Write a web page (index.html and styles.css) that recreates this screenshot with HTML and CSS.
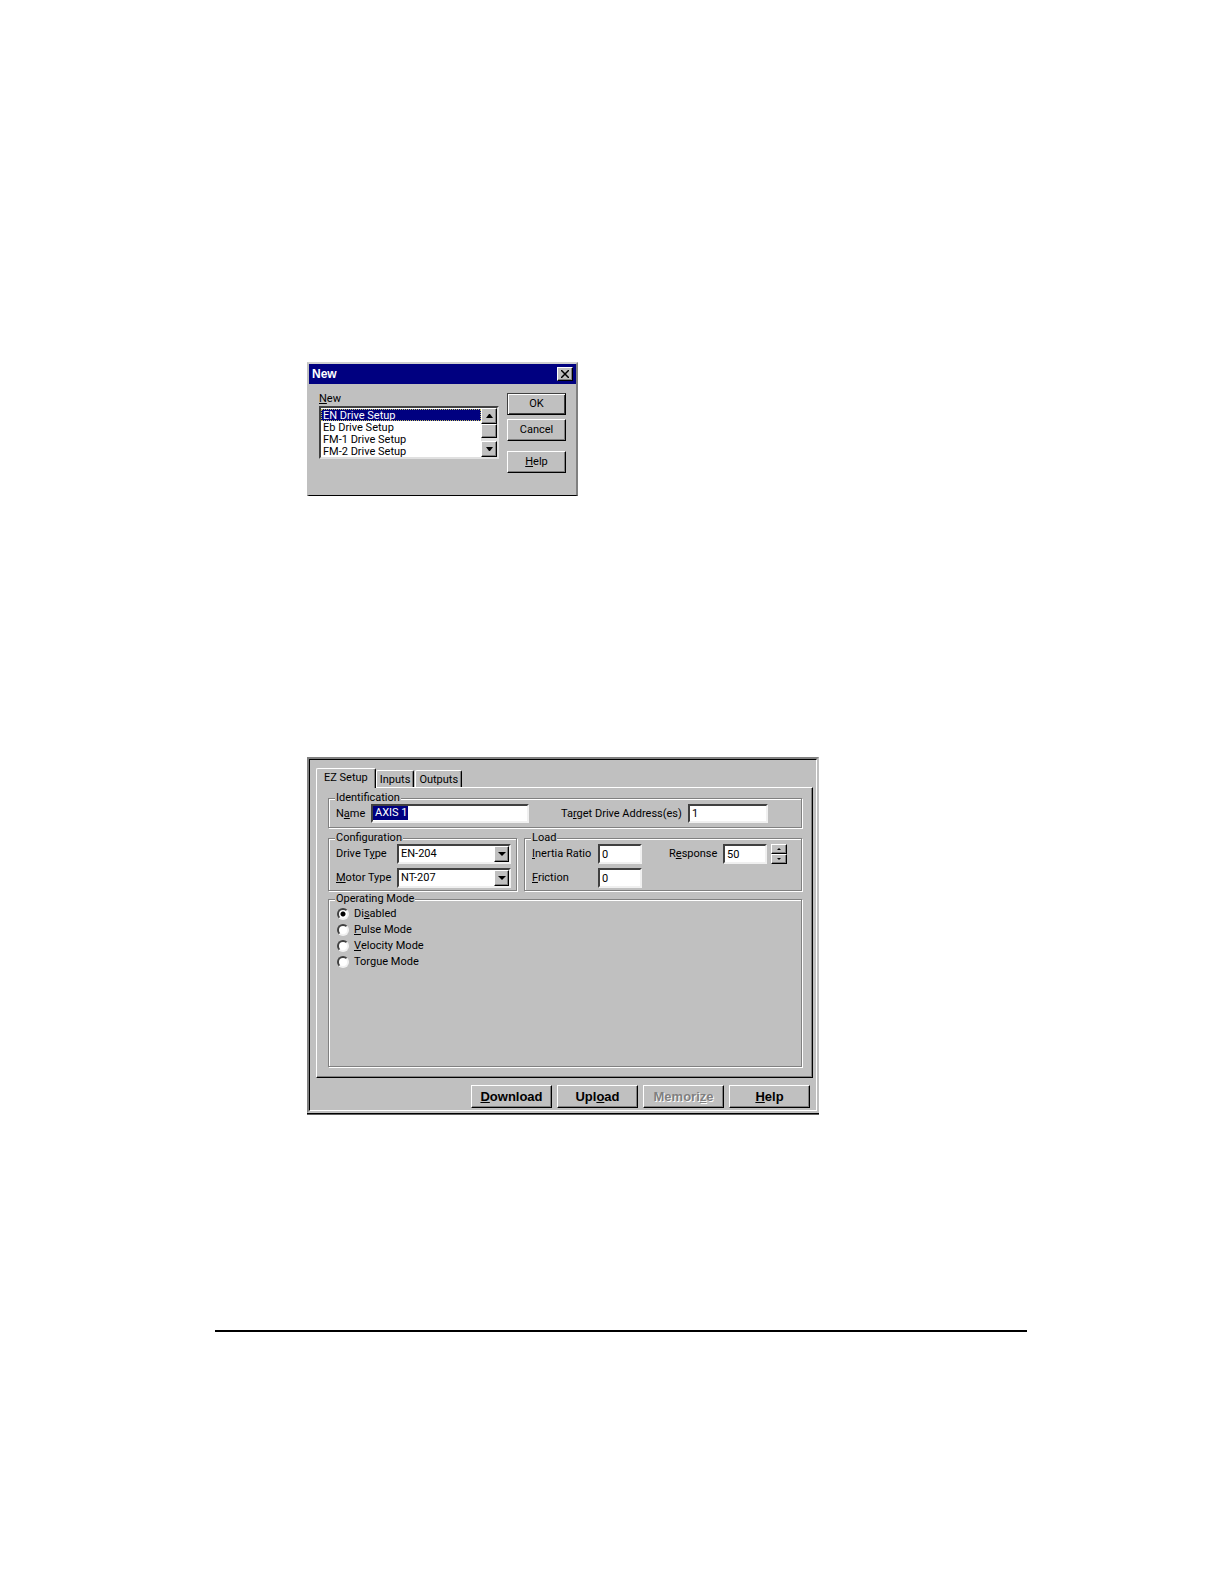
FILE: index.html
```html
<!DOCTYPE html>
<html lang="en">
<head>
  <meta charset="UTF-8">
  <title>Drive Setup</title>
  <meta name="viewport" content="width=device-width, initial-scale=1.0">
  <link rel="stylesheet" href="styles.css">
</head>
<body>
  <main>

    <!-- New dialog -->
    <section class="dialog">
      <header class="title-bar">
        <h2>New</h2>
        <button class="close" aria-label="Close">
          <svg width="8" height="8" viewBox="0 0 8 8"><path d="M0 0l8 8M8 0L0 8" stroke="#000" stroke-width="1.500"/></svg>
        </button>
      </header>
      <div class="dialog-body">
        <div class="list">
          <label for="new-list"><u>N</u>ew</label>
          <div class="list-box">
            <select id="new-list" size="4">
              <option selected>EN Drive Setup</option>
              <option>Eb Drive Setup</option>
              <option>FM-1 Drive Setup</option>
              <option>FM-2 Drive Setup</option>
            </select>
            <div class="scroll-bar">
              <button class="scroll-button" aria-label="Scroll up"><svg width="7" height="4" viewBox="0 0 7 4"><path d="M0 4h7L4 0H3z"/></svg></button>
              <div class="thumb"></div>
              <button class="scroll-button" aria-label="Scroll down"><svg width="7" height="4" viewBox="0 0 7 4"><path d="M0 0h7L4 4H3z"/></svg></button>
            </div>
          </div>
        </div>
        <div class="dialog-buttons">
          <button class="default">OK</button>
          <button>Cancel</button>
          <button class="help"><u>H</u>elp</button>
        </div>
      </div>
    </section>

    <!-- EZ Setup window -->
    <section class="window">
      <div class="window-inner">
        <nav class="tabs" role="tablist">
          <button class="tab active" role="tab" aria-selected="true">EZ Setup</button>
          <button class="tab" role="tab">Inputs</button>
          <button class="tab" role="tab">Outputs</button>
        </nav>

        <div class="panel">
          <fieldset class="identification">
            <legend>Identification</legend>
            <label for="name">N<u>a</u>me</label>
            <div class="name-field">
              <input type="text" id="name" value="AXIS 1">
              <span class="selection" aria-hidden="true">AXIS 1</span>
            </div>
            <label for="address">Ta<u>r</u>get Drive Address(es)</label>
            <input type="text" id="address" value="1">
          </fieldset>

          <div class="columns">
            <fieldset class="configuration">
              <legend>Configuration</legend>
              <label for="drive">Drive T<u>y</u>pe</label>
              <div class="drop-down">
                <select id="drive"><option>EN-204</option></select>
                <span class="arrow"><svg width="8" height="4" viewBox="0 0 8 4"><path d="M0 0h8L4 4z"/></svg></span>
              </div>
              <label for="motor"><u>M</u>otor Type</label>
              <div class="drop-down">
                <select id="motor"><option>NT-207</option></select>
                <span class="arrow"><svg width="8" height="4" viewBox="0 0 8 4"><path d="M0 0h8L4 4z"/></svg></span>
              </div>
            </fieldset>

            <fieldset class="load">
              <legend>Load</legend>
              <label for="inertia"><u>I</u>nertia Ratio</label>
              <input type="text" id="inertia" value="0">
              <label for="response" class="response">R<u>e</u>sponse</label>
              <input type="text" id="response" value="50">
              <div class="spinner">
                <button aria-label="Increase"><svg width="4" height="2" viewBox="0 0 4 2"><path d="M0 2h4L2 0z"/></svg></button>
                <button aria-label="Decrease"><svg width="4" height="2" viewBox="0 0 4 2"><path d="M0 0h4L2 2z"/></svg></button>
              </div>
              <label for="friction"><u>F</u>riction</label>
              <input type="text" id="friction" value="0">
            </fieldset>
          </div>

          <fieldset class="mode">
            <legend>Operating Mode</legend>
            <label><input type="radio" name="mode" checked>Di<u>s</u>abled</label>
            <label><input type="radio" name="mode"><u>P</u>ulse Mode</label>
            <label><input type="radio" name="mode"><u>V</u>elocity Mode</label>
            <label><input type="radio" name="mode">Tor<u>g</u>ue Mode</label>
          </fieldset>
        </div>

        <div class="actions">
          <button><u>D</u>ownload</button>
          <button>Upl<u>o</u>ad</button>
          <button disabled>Memori<u>z</u>e</button>
          <button><u>H</u>elp</button>
        </div>
      </div>
    </section>

    <hr>
  </main>
</body>
</html>
```

FILE: styles.css
```css
* {
  box-sizing: border-box;
}
body {
  background: #fff;
  color: #000;
  margin: 0;
}
body, button, input, select {
  font-family: Roboto, "Liberation Sans", Arial, sans-serif;
  font-size: 11px;
  line-height: 12px;
}
main {
  margin: 0 197px 0 215px;
  padding: 362px 0 64px;
}
u {
  text-underline-offset: 1px;
}
svg {
  display: block;
}
hr {
  background: #000;
  border: 0;
  height: 2px;
  margin: 217px 0 0;
}

/*raised grey buttons*/
button, .thumb, .arrow {
  align-items: center;
  background: #c0c0c0;
  border: 1px solid;
  border-color: #fff #000 #000 #fff;
  box-shadow: inset -1px -1px #808080;
  color: #000;
  display: flex;
  justify-content: center;
  margin: 0;
  padding: 0;
}

/*New dialog*/
.dialog {
  background: #c0c0c0;
  border: 2px solid;
  border-color: #d0d0d0 #808080 #808080 #c0c0c0;
  border-bottom: 1px solid #000;
  margin-left: 92px;
  max-width: 271px;
}
.title-bar {
  align-items: center;
  background: #000080;
  color: #fff;
  display: flex;
  height: 20px;
  justify-content: space-between;
  padding: 0 3px;
}
.title-bar h2 {
  font-family: "Liberation Sans", Arial, sans-serif;
  font-size: 12px;
  margin: 0;
}
.close {
  height: 14px;
  width: 16px;
}
.dialog-body {
  display: flex;
  gap: 8px;
  height: 111px;
  padding: 9px 10px 0;
}
.list {
  flex: 1;
}
.list label {
  display: block;
  height: 13px;
}
.list-box {
  background: #fff;
  border: 2px solid;
  border-color: #404040 #e0e0e0 #e0e0e0 #404040;
  display: flex;
  height: 53px;
}
.list-box select {
  border: 0;
  flex: 1;
  height: 49px;
  outline: 0;
  padding: 1px 0 0;
  scrollbar-width: none;
}
.list-box option {
  height: 12px;
  line-height: 12px;
  min-height: 12px;
  padding: 0 2px;
}
.list-box option:checked {
  background-image: linear-gradient(#000080, #000080);
  outline: 1px dotted #c0c060;
  outline-offset: -1px;
  -webkit-text-fill-color: #fff;
}
.scroll-bar {
  background: #e0e0e0;
  display: flex;
  flex-direction: column;
  width: 16px;
}
.scroll-button {
  height: 16px;
}
.thumb {
  height: 14px;
  margin-bottom: auto;
}
.dialog-buttons {
  display: flex;
  flex-direction: column;
  width: 59px;
}
.dialog-buttons button {
  height: 22px;
  margin-bottom: 4px;
}
.dialog-buttons .default {
  border-color: #404040 #000 #000 #404040;
  box-shadow: inset 1px 1px #fff, inset -1px -1px #404040;
}
.dialog-buttons .help {
  margin-top: 6px;
}

/*Setup window*/
.window {
  background: #c0c0c0;
  border: 2px solid;
  border-color: #808080 #c0c0c0 #c0c0c0 #808080;
  box-shadow: 0 1px #000, 0 2px #606060;
  margin: 261px 0 0 92px;
  max-width: 512px;
}
.window-inner {
  border: 1px solid;
  border-color: #000 #fff #fff #000;
  padding: 8px 3px 2px 6px;
}
.tabs {
  align-items: flex-end;
  display: flex;
  height: 19px;
}
.tab {
  border-color: #fff #000 #c0c0c0 #fff;
  border-bottom: 0;
  border-radius: 2px 2px 0 0;
  box-shadow: inset -1px 0 #808080;
  height: 17px;
  margin-right: 1px;
  padding: 1px 3px 0;
}
.tab.active {
  height: 20px;
  margin: 0 0 -1px;
  padding: 0 7px 2px;
  position: relative;
}
.panel {
  border: 1px solid;
  border-color: #fff #000 #000 #fff;
  box-shadow: inset -1px -1px #808080;
  padding: 4px 10px 10px 11px;
}
/*etched frame, grey line with a white one beside it*/
fieldset {
  border: 1px solid #808080;
  box-shadow: 1px 1px #fff, inset 1px 1px #fff;
  margin: 0;
  min-width: 0;
}
legend {
  background: #c0c0c0;
  line-height: 12px;
  margin-left: -1px;
  padding: 0 1px;
}
input[type="text"], .drop-down select {
  background: #fff;
  border: 2px solid;
  border-color: #404040 #f0f0f0 #f0f0f0 #404040;
  border-radius: 0;
  color: #000;
  height: 20px;
  margin: 0;
  outline: 0;
  padding: 0 2px;
  width: 100%;
}

.identification {
  display: grid;
  grid-template-columns: 35px 158px 1fr 80px;
  height: 36px;
  padding: 0 33px 0 7px;
}
.identification label {
  padding-top: 4px;
  white-space: nowrap;
}
.identification label[for="address"] {
  padding-left: 32px;
}
.identification input[type="text"] {
  height: 19px;
}
.name-field {
  position: relative;
}
.selection {
  background: #000080;
  color: #fff;
  left: 2px;
  line-height: 14px;
  padding-left: 2px;
  pointer-events: none;
  position: absolute;
  top: 2px;
}

.columns {
  display: grid;
  gap: 7px;
  grid-template-columns: 189px 1fr;
  margin: 4px 0 2px;
}
.configuration, .load {
  align-content: start;
  display: grid;
  gap: 4px 0;
  height: 59px;
}
.configuration {
  grid-template-columns: 61px 1fr;
  padding: 0 5px 0 7px;
}
.configuration label, .load label {
  padding-top: 4px;
}
.drop-down {
  position: relative;
}
.drop-down select {
  appearance: none;
  display: block;
}
.arrow {
  height: 16px;
  pointer-events: none;
  position: absolute;
  right: 2px;
  top: 2px;
  width: 15px;
}
.load {
  grid-template-columns: 66px 44px 1fr 44px 20px;
  padding: 0 14px 0 7px;
}
.load label.response {
  padding-left: 27px;
}
.spinner {
  padding-left: 4px;
}
.spinner button {
  height: 10px;
  width: 16px;
}

.mode {
  height: 174px;
  padding: 0 7px;
}
.mode label {
  align-items: center;
  display: flex;
  height: 16px;
}
.mode legend + label {
  margin-top: 1px;
}
.mode input {
  appearance: none;
  background: #fff;
  border: 2px solid;
  border-color: #404040 #f0f0f0 #f0f0f0 #404040;
  border-radius: 50%;
  height: 12px;
  margin: 0 5px 0 1px;
  width: 12px;
}
.mode input:checked {
  background: radial-gradient(#000 2px, #fff 3px);
}

.actions {
  display: flex;
  gap: 5px;
  justify-content: flex-end;
  padding: 7px 3px 0 0;
}
.actions button {
  font-family: "Liberation Sans", Arial, sans-serif;
  font-size: 13px;
  font-weight: bold;
  height: 23px;
  width: 81px;
}
.actions button:disabled {
  color: #808080;
  text-shadow: 1px 1px #fff;
}
```
